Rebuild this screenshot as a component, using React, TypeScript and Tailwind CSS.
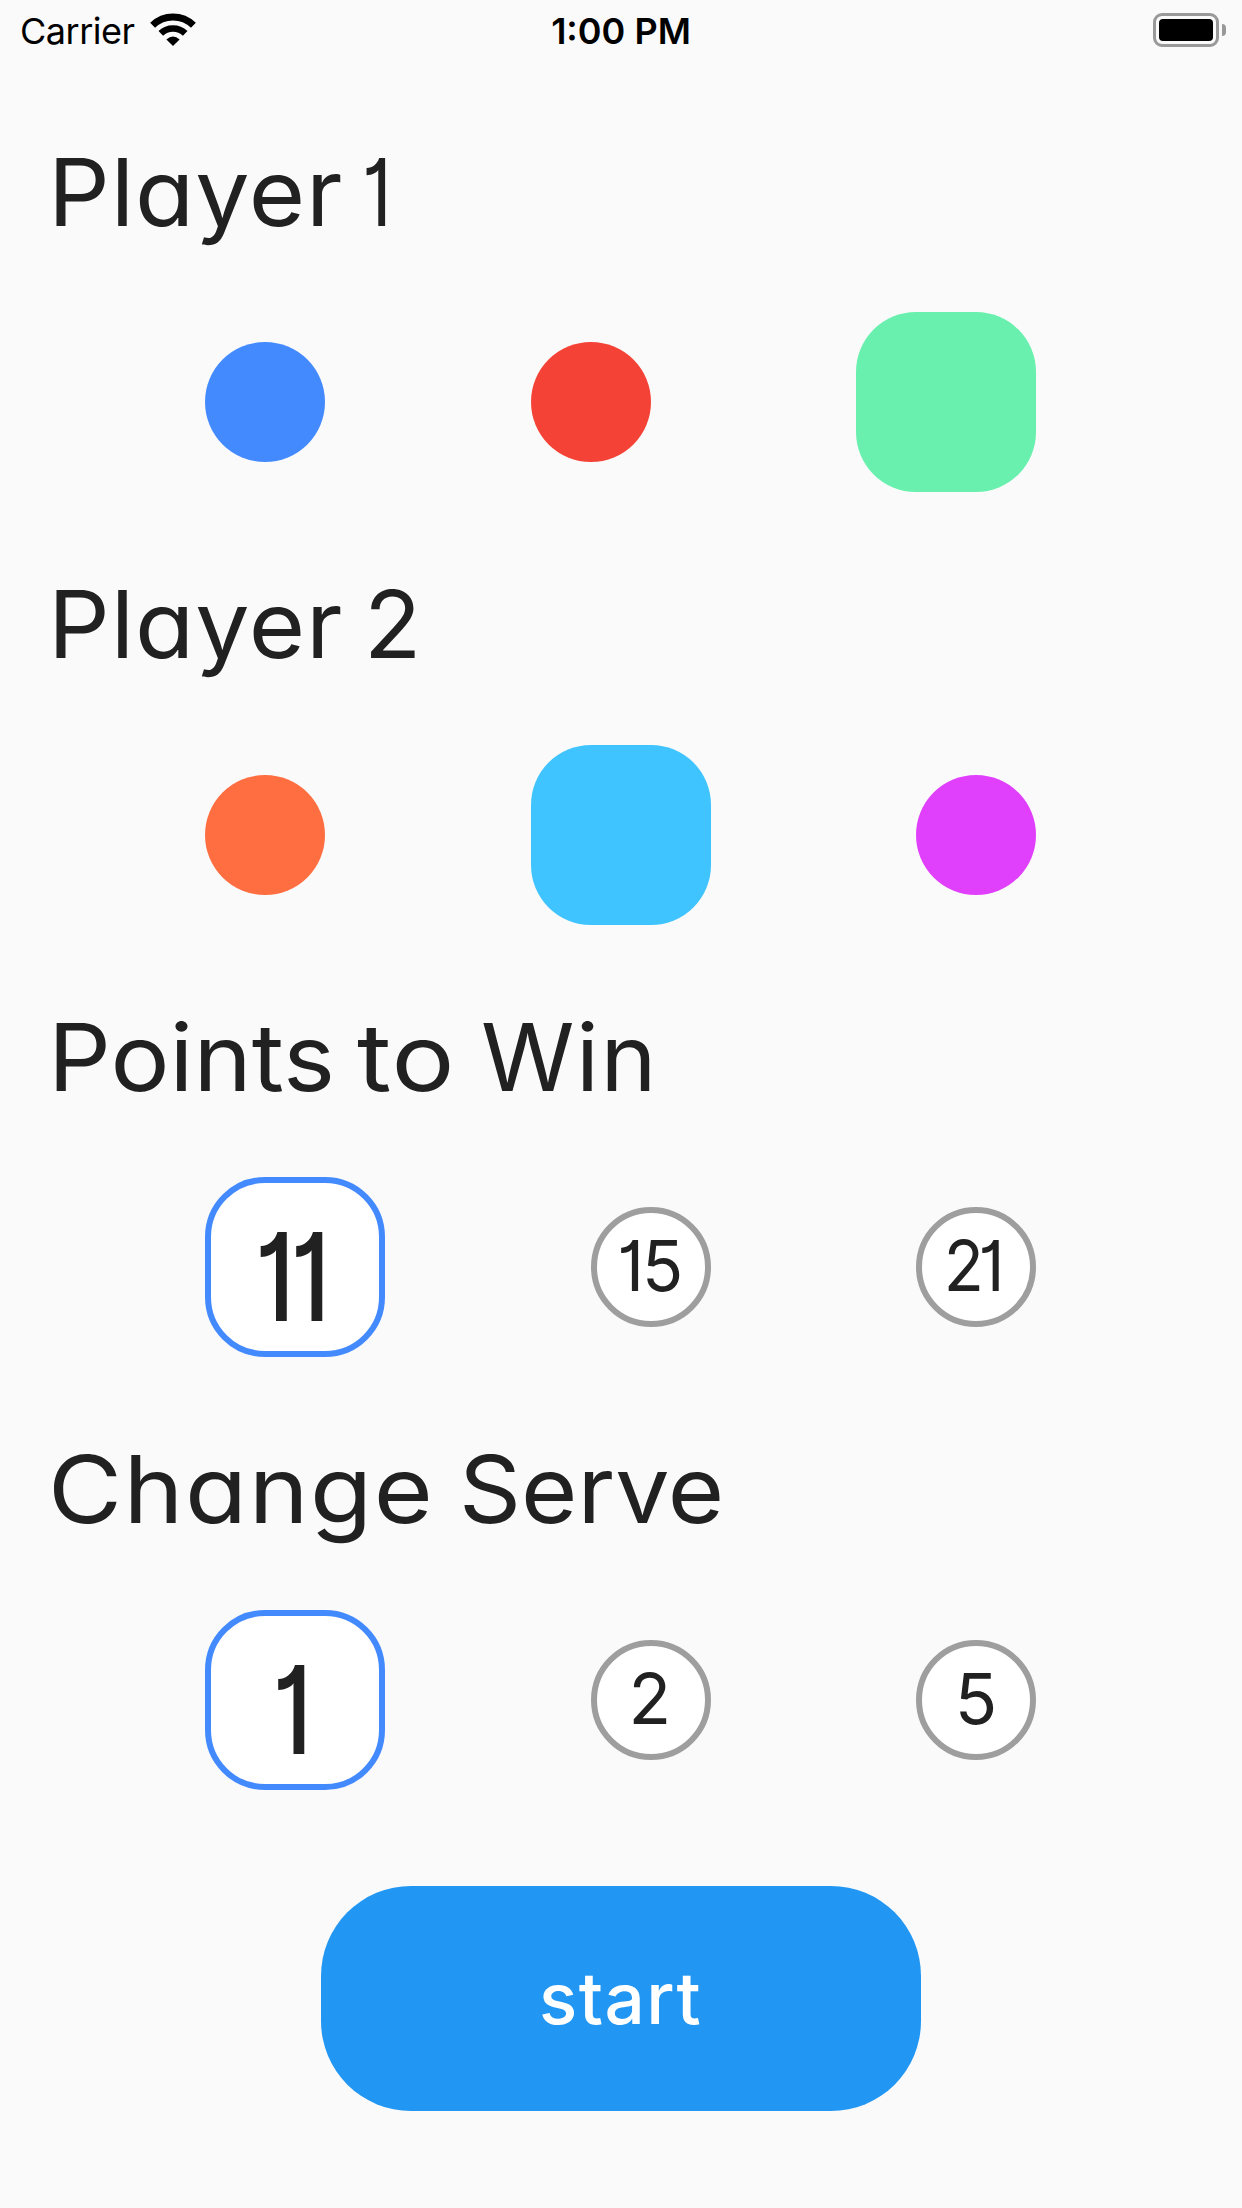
import React from "react";

type Option = { label?: string; selected?: boolean; fill?: string; fit?: string };
type Word = { text: string; fit: string };

function Choice({ label, selected, fill, fit = "" }: Option) {
  const size = selected ? "size-[180px] rounded-[60px]" : "size-[120px] rounded-full";
  const skin = fill ?? `border-[6px] bg-white ${selected ? "border-[#448aff]" : "border-[#9e9e9e]"}`;
  const type = selected
    ? "text-[122px] leading-[122px] font-medium pt-[20px]"
    : "text-[70px] leading-[70px] pb-[2px]";
  return (
    <button className={`flex shrink-0 items-center justify-center ${size} ${skin}`}>
      {label && <span className={`${type} ${fit}`}>{label}</span>}
    </button>
  );
}

function Section({ title, options }: { title: Word[]; options: Option[] }) {
  return (
    <section className="h-[432.5px]">
      <h2 className="flex h-[252.5px] pt-15 pl-[48px] text-[93px] leading-[144px] whitespace-nowrap">
        {title.map((w) => (
          <span key={w.text} className={`shrink-0 origin-left ${w.fit}`}>
            {w.text}{" "}
          </span>
        ))}
      </h2>
      <div className="flex h-[180px] items-center justify-evenly pr-[0.5px]">
        {options.map((o, i) => (
          <Choice key={i} {...o} />
        ))}
      </div>
    </section>
  );
}

function WifiIcon() {
  return (
    <svg className="mt-[4px] ml-[15px] h-[34px] w-[46px]" viewBox="0 0 46 34" fill="none">
      <path d="M2.6 12.2 A29.2 29.2 0 0 1 43.4 12.2" stroke="#000" strokeWidth="7" />
      <path d="M10.8 20.4 A17.6 17.6 0 0 1 35.2 20.4" stroke="#000" strokeWidth="6.6" />
      <path d="M16.4 26.4 Q23 20.4 29.6 26.4 L23 33 Z" fill="#000" />
    </svg>
  );
}

const player: Word = { text: "Player", fit: "w-[316px] scale-x-[1.04] tracking-[0.9px]" };

export default function App() {
  return (
    <main className="h-[2208px] w-[1242px] overflow-hidden bg-[#fafafa] font-['Inter',sans-serif] text-[#212121] [font-feature-settings:'cv11','cv01']">
      <header className="grid h-[59.7px] grid-cols-3 pt-[9px] text-black [font-feature-settings:normal]">
        <div className="flex pl-[20px]">
          <span className="text-[36px] leading-[44px] tracking-[-0.5px]">Carrier</span>
          <WifiIcon />
        </div>
        <span className="text-center text-[36px] leading-[44px] font-semibold">1:00 PM</span>
        <div className="flex items-start justify-end pt-1 pr-4">
          <div className="h-[34px] w-[66px] rounded-[9px] border-[3px] border-[#999] p-[3px]">
            <div className="h-full rounded-[4px] bg-black" />
          </div>
          <div className="mt-[11px] ml-[3px] h-3 w-1 rounded-r-full bg-[#999]" />
        </div>
      </header>
      <Section
        title={[player, { text: "1", fit: "-ml-[2px] scale-x-80" }]}
        options={[{ fill: "bg-[#448aff]" }, { fill: "bg-[#f44336]" }, { fill: "bg-[#69f0ae]", selected: true }]}
      />
      <Section
        title={[player, { text: "2", fit: "scale-x-[1.01]" }]}
        options={[{ fill: "bg-[#ff6e40]" }, { fill: "bg-[#40c4ff]", selected: true }, { fill: "bg-[#e040fb]" }]}
      />
      <Section
        title={[
          { text: "Points", fit: "w-[309px] scale-x-[1.06] tracking-0" },
          { text: "to", fit: "w-[124px] scale-x-[1.13] tracking-[1px]" },
          { text: "Win", fit: "scale-x-[1.02] tracking-[1.5px]" },
        ]}
        options={[
          { label: "11", selected: true, fit: "scale-x-80 tracking-[-5px] -translate-x-[5px]" },
          { label: "15", fit: "scale-x-[0.97] tracking-[-2px] -translate-x-[2px]" },
          { label: "21", fit: "scale-x-[0.94] tracking-[-6px] -translate-x-[5px]" },
        ]}
      />
      <Section
        title={[
          { text: "Change", fit: "w-[411px] scale-x-[1.09] tracking-[1.4px]" },
          { text: "Serve", fit: "scale-x-[1.04]" },
        ]}
        options={[
          { label: "1", selected: true, fit: "scale-x-80 tracking-[-5px] -translate-x-[5px]" },
          { label: "2", fit: "-translate-x-px" },
          { label: "5", fit: "" },
        ]}
      />
      <button className="mx-auto mt-[96.3px] flex h-[225px] w-[600px] items-center justify-center rounded-[90px] bg-[#2196f3] pr-[1px] text-[71px] leading-none font-medium tracking-[1.4px] text-white [font-feature-settings:normal]">
        start
      </button>
    </main>
  );
}
